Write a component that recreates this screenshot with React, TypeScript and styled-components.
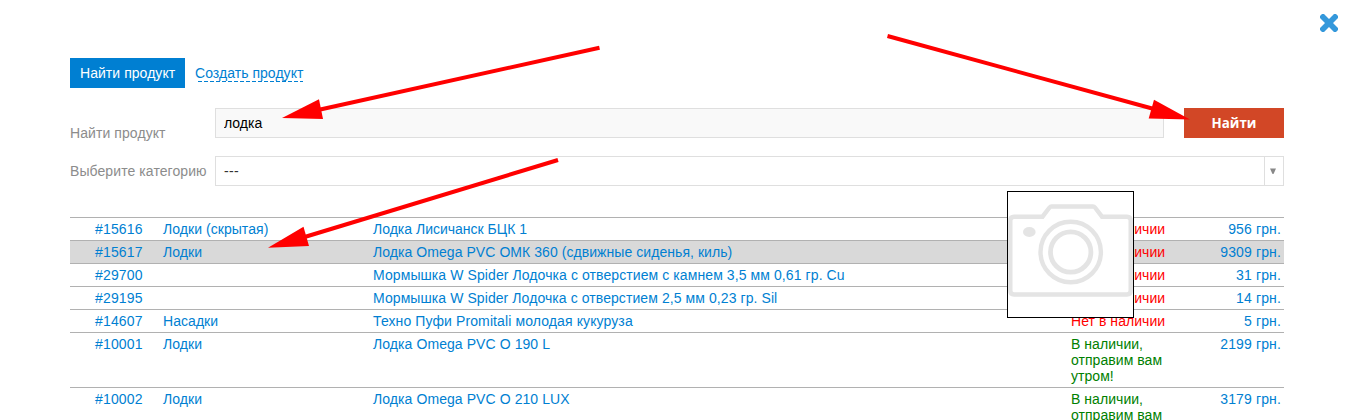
import React from "react";
import styled, { createGlobalStyle } from "styled-components";

const GlobalStyle = createGlobalStyle`
  * { box-sizing: border-box; }
  body {
    margin: 0;
    overflow: hidden;
    background: #fff;
    font: 14px/16px "Liberation Sans", Arial, sans-serif;
    color: #007fd2;
  }
`;

const Dialog = styled.main`
  position: relative;
  height: 420px;
  overflow: hidden;
  padding: 58px 82px 0 70px;
`;

const CloseButton = styled.button`
  position: absolute;
  top: 14px;
  right: 28px;
  width: 18px;
  height: 18px;
  padding: 0;
  border: 0;
  background: none;
  svg { display: block; }
`;

const Tabs = styled.nav`
  display: flex;
  gap: 10px;
  height: 30px;
`;

const ActiveTab = styled.span`
  width: 115px;
  padding: 7px 10px;
  white-space: nowrap;
  background: #007fd2;
  color: #fff;
  letter-spacing: 0.05px;
`;

const TabLink = styled.span`
  align-self: flex-start;
  margin-top: 7px;
  white-space: nowrap;
  height: 17px;
  letter-spacing: 0.04px;
  background: repeating-linear-gradient(90deg, #007fd2 0 4px, transparent 4px 6px) 3px 100% / 105px 1px no-repeat;
`;

const FormRow = styled.div<{ $top: number }>`
  display: flex;
  height: 30px;
  margin-top: ${(p) => p.$top}px;
`;

const Label = styled.label<{ $drop: number }>`
  width: 145px;
  padding-top: ${(p) => p.$drop}px;
  white-space: nowrap;
  color: #8c8c8c;
  letter-spacing: 0.08px;
`;

const SearchInput = styled.input`
  flex: 1;
  height: 30px;
  padding: 0 8px;
  border: 1px solid #dfdfdf;
  border-radius: 0;
  background: #f9f9f9;
  font: inherit;
  color: #000;
  outline: 0;
`;

const SearchButton = styled.button`
  width: 100px;
  height: 30px;
  margin-left: 20px;
  padding: 0;
  border: 0;
  background: #d24726;
  color: #fff;
  font: bold 13.333px/30px "Open Sans", sans-serif;
`;

const Select = styled.div`
  display: flex;
  flex: 1;
  border: 1px solid #dfdfdf;
  color: #333;
`;

const SelectValue = styled.span`
  flex: 1;
  padding: 6px 8px;
  letter-spacing: 0.3px;
`;

const SelectToggle = styled.span`
  width: 19px;
  padding: 11px 0 0 5px;
  border-left: 1px solid #dfdfdf;
  svg { display: block; }
`;

const Results = styled.div`
  margin-top: 31px;
`;

const ResultRow = styled.div<{ $active?: boolean }>`
  display: grid;
  grid-template-columns: 93px 210px 698px 110px 1fr;
  padding: 3px 0;
  border-top: 1px solid #b1b1b1;
  background: ${(p) => (p.$active ? "#d9d9d9" : "transparent")};
`;

const Code = styled.span`
  padding-left: 25px;
  letter-spacing: 0.17px;
`;

const Category = styled.span`
  letter-spacing: 0.05px;
`;

const Name = styled.span<{ $tracking: number }>`
  letter-spacing: ${(p) => p.$tracking}px;
`;

const Stock = styled.span<{ $available: boolean }>`
  color: ${(p) => (p.$available ? "#008000" : "#f00")};
  letter-spacing: 0.05px;
`;

const Price = styled.span`
  padding-right: 3px;
  text-align: right;
  letter-spacing: 0.13px;
`;

const Preview = styled.div`
  position: absolute;
  top: 191px;
  left: 1007px;
  width: 127px;
  height: 127px;
  border: 1px solid #000;
  background: #fff;
  svg { display: block; }
`;

const Annotations = styled.svg`
  position: absolute;
  inset: 0;
  pointer-events: none;
`;

const products = [
  { code: "#15616", category: "Лодки (скрытая)", name: "Лодка Лисичанск БЦК 1", tracking: 0, available: false, price: 956 },
  { code: "#15617", category: "Лодки", name: "Лодка Omega PVC ОМК 360 (сдвижные сиденья, киль)", tracking: 0.06, available: false, price: 9309, active: true },
  { code: "#29700", category: "", name: "Мормышка W Spider Лодочка с отверстием с камнем 3,5 мм 0,61 гр. Cu", tracking: 0.09, available: false, price: 31 },
  { code: "#29195", category: "", name: "Мормышка W Spider Лодочка с отверстием 2,5 мм 0,23 гр. Sil", tracking: 0.08, available: false, price: 14 },
  { code: "#14607", category: "Насадки", name: "Техно Пуфи Promitali молодая кукуруза", tracking: 0.11, available: false, price: 5 },
  { code: "#10001", category: "Лодки", name: "Лодка Omega PVC O 190 L", tracking: 0.08, available: true, price: 2199 },
  { code: "#10002", category: "Лодки", name: "Лодка Omega PVC O 210 LUX", tracking: 0.08, available: true, price: 3179 },
];

export default function App() {
  return (
    <Dialog>
      <GlobalStyle />
      <CloseButton aria-label="Закрыть">
        <svg width="18" height="18" viewBox="0 0 18 18">
          <path
            d="M2 0H4L9 5 14 0H16L18 2V4L13 9 18 14V16L16 18H14L9 13 4 18H2L0 16V14L5 9 0 4V2Z"
            fill="#3498db"
          />
        </svg>
      </CloseButton>
      <Tabs>
        <ActiveTab>Найти продукт</ActiveTab>
        <TabLink>Создать продукт</TabLink>
      </Tabs>
      <FormRow $top={20}>
        <Label $drop={17}>Найти продукт</Label>
        <SearchInput defaultValue="лодка" />
        <SearchButton>Найти</SearchButton>
      </FormRow>
      <FormRow $top={18}>
        <Label $drop={7}>Выберите категорию</Label>
        <Select>
          <SelectValue>---</SelectValue>
          <SelectToggle>
            <svg width="6" height="6" viewBox="0 0 6 6">
              <path d="M0 .5H6L3.5 6h-1Z" fill="#888" />
            </svg>
          </SelectToggle>
        </Select>
      </FormRow>
      <Results>
        {products.map((p) => (
          <ResultRow key={p.code} $active={p.active}>
            <Code>{p.code}</Code>
            <Category>{p.category}</Category>
            <Name $tracking={p.tracking}>{p.name}</Name>
            <Stock $available={p.available}>
              {p.available ? "В наличии, отправим вам утром!" : "Нет в наличии"}
            </Stock>
            <Price>{p.price} грн.</Price>
          </ResultRow>
        ))}
      </Results>
      <Preview>
        <svg width="125" height="125" viewBox="0 0 125 125" fill="none" stroke="#e4e4e4">
          <path
            d="M6 24.7H34.5L41.5 15.5Q42.3 14.5 43.5 14.5H85Q86.2 14.5 87 15.5L94 24.7H119Q122.7 24.7 122.7 28.5V98.5Q122.7 102.5 119 102.5H6Q2.3 102.5 2.3 98.5V28.5Q2.3 24.7 6 24.7Z"
            strokeWidth="4.4"
          />
          <circle cx="62.7" cy="60" r="30.2" strokeWidth="4.4" />
          <circle cx="62.7" cy="60" r="20.2" strokeWidth="4.8" />
          <ellipse cx="21.3" cy="40" rx="6.3" ry="5" fill="#e4e4e4" stroke="none" />
        </svg>
      </Preview>
      <Annotations width="1366" height="420" viewBox="0 0 1366 420">
        <g stroke="#f00" strokeWidth="4">
          <path d="M599.5 47.8 318 110" />
          <path d="M887.5 36 1154 109" />
          <path d="M558 160 303 237.5" />
        </g>
        <g fill="#f00">
          <path d="M282 118 319 99.3 323 119Z" />
          <path d="M1190 119.5 1154 99.7 1148.7 118.5Z" />
          <path d="M268 247.8 303.5 226.8 309 246Z" />
        </g>
      </Annotations>
    </Dialog>
  );
}
